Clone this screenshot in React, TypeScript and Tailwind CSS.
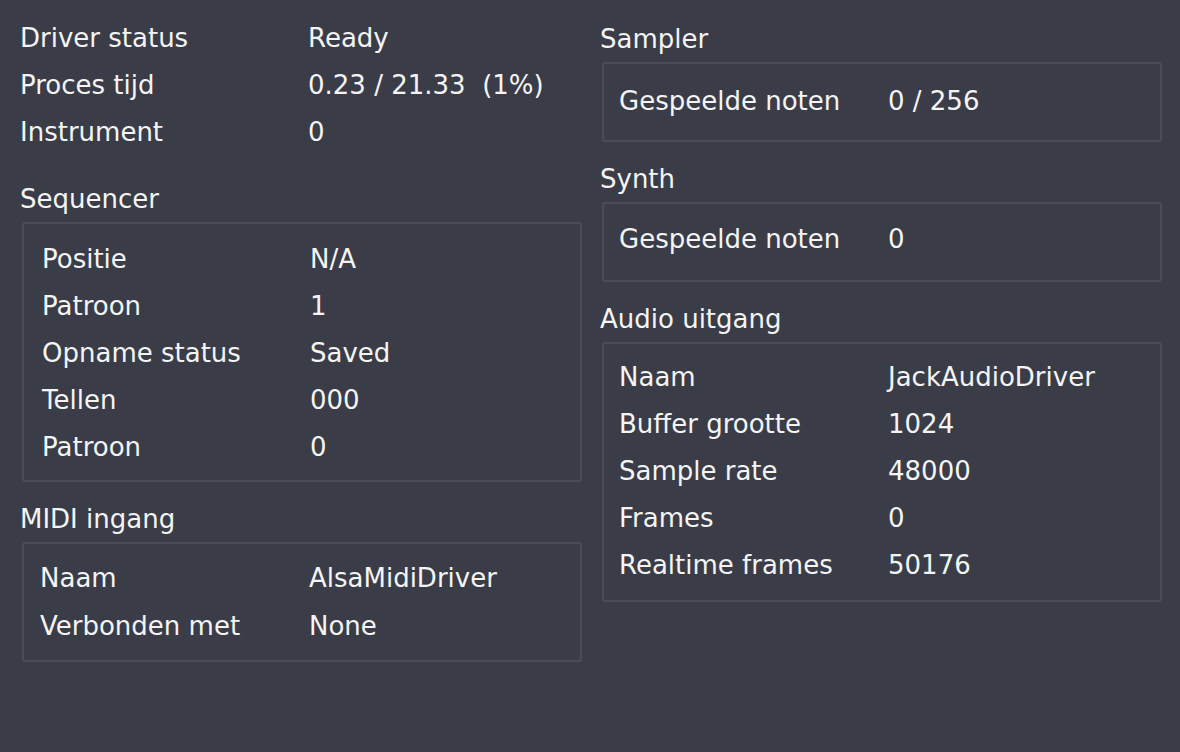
import React from 'react';

type Row = [string, string];

const InfoRows: React.FC<{ rows: Row[]; labelW: string; rowH: string }> = ({ rows, labelW, rowH }) => (
  <div className="flex flex-col">
    {rows.map(([label, value]) => (
      <div key={label + value} className={`flex items-center ${rowH}`}>
        <div className={`${labelW} shrink-0 whitespace-pre`}>{label}</div>
        <div className="whitespace-pre">{value}</div>
      </div>
    ))}
  </div>
);

const App: React.FC = () => {
  return (
    <div
      className="w-[1180px] h-[752px] bg-[#3a3d47] text-[#f4f4f4] text-[26px] leading-none flex overflow-hidden"
      style={{ fontFamily: '"DejaVu Sans", sans-serif' }}
    >
      {/* linker kolom */}
      <div className="w-[582px] pl-[20px] pt-[14px] flex flex-col shrink-0">
        <div>
          <InfoRows
            labelW="w-[288px]"
            rowH="h-[47px]"
            rows={[
              ['Driver status', 'Ready'],
              ['Proces tijd', '0.23 / 21.33  (1%)'],
              ['Instrument', '0'],
            ]}
          />
        </div>

        <div className="mt-[29px] h-[30px] flex items-center">Sequencer</div>
        <div className="mt-[8px] ml-[2px] h-[260px] border-2 border-[#4a4d57] rounded-[3px] pl-[18px] pt-[11px]">
          <InfoRows
            labelW="w-[268px]"
            rowH="h-[47px]"
            rows={[
              ['Positie', 'N/A'],
              ['Patroon', '1'],
              ['Opname status', 'Saved'],
              ['Tellen', '000'],
              ['Patroon', '0'],
            ]}
          />
        </div>

        <div className="mt-[22px] h-[30px] flex items-center">MIDI ingang</div>
        <div className="mt-[8px] ml-[2px] h-[120px] border-2 border-[#4a4d57] rounded-[3px] pl-[16px] pt-[10px]">
          <InfoRows
            labelW="w-[269px]"
            rowH="h-[48px]"
            rows={[
              ['Naam', 'AlsaMidiDriver'],
              ['Verbonden met', 'None'],
            ]}
          />
        </div>
      </div>

      {/* rechter kolom */}
      <div className="w-[562px] ml-[18px] pt-[24px] flex flex-col shrink-0">
        <div className="h-[30px] flex items-center">Sampler</div>
        <div className="mt-[8px] ml-[2px] h-[80px] border-2 border-[#4a4d57] rounded-[3px] pl-[15px] pt-[13px]">
          <InfoRows labelW="w-[269px]" rowH="h-[47px]" rows={[['Gespeelde noten', '0 / 256']]} />
        </div>

        <div className="mt-[22px] h-[30px] flex items-center">Synth</div>
        <div className="mt-[8px] ml-[2px] h-[80px] border-2 border-[#4a4d57] rounded-[3px] pl-[15px] pt-[11px]">
          <InfoRows labelW="w-[269px]" rowH="h-[47px]" rows={[['Gespeelde noten', '0']]} />
        </div>

        <div className="mt-[22px] h-[30px] flex items-center">Audio uitgang</div>
        <div className="mt-[8px] ml-[2px] h-[260px] border-2 border-[#4a4d57] rounded-[3px] pl-[15px] pt-[9px]">
          <InfoRows
            labelW="w-[269px]"
            rowH="h-[47px]"
            rows={[
              ['Naam', 'JackAudioDriver'],
              ['Buffer grootte', '1024'],
              ['Sample rate', '48000'],
              ['Frames', '0'],
              ['Realtime frames', '50176'],
            ]}
          />
        </div>
      </div>
    </div>
  );
};

export default App;
